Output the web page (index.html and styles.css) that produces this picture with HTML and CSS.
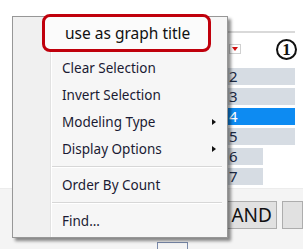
FILE: index.html
```html
<!DOCTYPE html>
<html>

<head>
    <meta charset="utf-8">
    <title>Column menu</title>
    <link rel="stylesheet" href="styles.css">
</head>

<body>
    <div class="stage">

        <div class="table">
            <div class="rule"></div>
            <div class="head">
                <span class="dd"></span>
                <span class="circ">1</span>
            </div>
            <div class="rows">
                <div class="row">2</div>
                <div class="row">3</div>
                <div class="row sel">4</div>
                <div class="row">5</div>
                <div class="row short">6</div>
                <div class="row short">7</div>
            </div>
        </div>

        <div class="footer">
            <span class="ghost"></span>
            <span class="btn">AND</span>
            <span class="btn btn2"></span>
        </div>

        <!-- popup menu over the table -->
        <div class="menu">
            <div class="item">Clear Selection</div>
            <div class="item">Invert Selection</div>
            <div class="item sub">Modeling Type</div>
            <div class="item sub">Display Options</div>
            <div class="sep"></div>
            <div class="item">Order By Count</div>
            <div class="sep"></div>
            <div class="item">Find...</div>
        </div>

        <div class="callout">use as graph title</div>
    </div>
</body>

</html>
```

FILE: styles.css
```css
body {
    margin: 0;
    background: #ffffff;
    font-family: "Noto Sans", "Open Sans", sans-serif;
}

.stage {
    position: relative;
    width: 303px;
    height: 249px;
    overflow: hidden;
}

/* table behind the menu */
.table {
    margin-left: 226px;
    width: 69px;
    padding-top: 31px;
}

.rule {
    height: 2px;
    background: #d9d9d9;
}

.head {
    height: 32px;
    display: flex;
    align-items: center;
    justify-content: space-between;
    padding-left: 3px;
}

.dd {
    position: relative;
    width: 10px;
    height: 8px;
    border: 1px solid #d0d0d0;
    background: #ffffff;
}

.dd::after {
    content: "";
    position: absolute;
    left: 2px;
    top: 2px;
    border-left: 3px solid transparent;
    border-right: 3px solid transparent;
    border-top: 4px solid #d01010;
}

/* circled number drawn as a ring */
.circ {
    width: 17px;
    height: 17px;
    border: 2px solid #111111;
    border-radius: 50%;
    margin-right: -2px;
    font-family: "Liberation Serif", serif;
    font-size: 17px;
    font-weight: bold;
    line-height: 17px;
    text-align: center;
    color: #111111;
}

.rows {
    padding-top: 3px;
}

.row {
    height: 17px;
    margin-bottom: 3px;
    padding-left: 3px;
    background: #d6dce3;
    color: #1c2a44;
    font-size: 15px;
    line-height: 17px;
}

.row.sel {
    background: #0d8bf2;
    color: #ffffff;
}

.row.short {
    width: 34px;
}

.footer {
    margin-top: 2px;
    height: 59px;
    display: flex;
    align-items: flex-start;
    padding-top: 12px;
    padding-left: 157px;
    background: #f4f4f4;
    border-top: 1px solid #ececec;
}

.ghost {
    margin-top: 41px;
    width: 31px;
    height: 10px;
    border: 1px solid #7a8aaa;
    border-bottom: none;
}

.btn {
    margin-left: 38px;
    width: 53px;
    height: 26px;
    border: 1px solid #adadad;
    background: #e1e1e1;
    color: #111111;
    font-size: 19px;
    line-height: 26px;
    text-align: center;
}

.btn2 {
    margin-left: 5px;
    width: 20px;
}

/* context menu */
.menu {
    position: absolute;
    left: 12px;
    top: 16px;
    width: 216px;
    height: 222px;
    box-sizing: border-box;
    padding-top: 38px;
    border: 1px solid #979797;
    background: linear-gradient(to right, #f0f0f0 0 37px, #e2e2e2 37px 38px, #ffffff 38px 39px, #f6f6f6 39px);
    box-shadow: 3px 3px 3px rgba(0, 0, 0, 0.45);
}

.item {
    position: relative;
    height: 27px;
    line-height: 27px;
    padding-left: 49px;
    font-size: 13.5px;
    color: #1a1a33;
}

.item.sub::after {
    content: "";
    position: absolute;
    right: 11px;
    top: 10px;
    border-top: 3.5px solid transparent;
    border-bottom: 3.5px solid transparent;
    border-left: 4px solid #111111;
}

.sep {
    height: 1px;
    margin: 3px 5px 4px 39px;
    background: #d7d7d7;
    border-bottom: 1px solid #ffffff;
}

.callout {
    position: absolute;
    left: 42px;
    top: 14px;
    width: 169px;
    height: 38px;
    box-sizing: border-box;
    padding-left: 20px;
    border: 3px solid #c0000c;
    border-radius: 8px;
    background: #fbfbfb;
    color: #111111;
    font-size: 15.5px;
    line-height: 32px;
}
```
